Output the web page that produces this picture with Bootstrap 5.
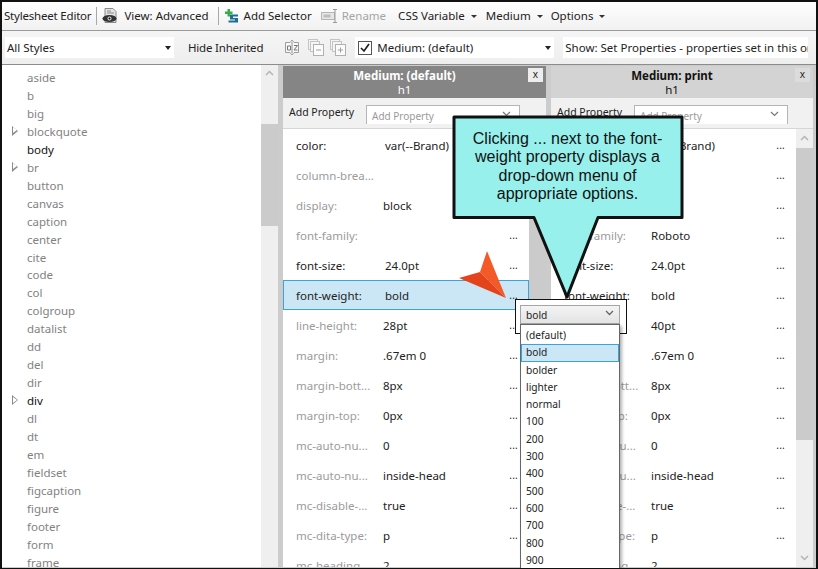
<!DOCTYPE html>
<html lang="en">
<head>
  <meta charset="UTF-8" />
  <title>Stylesheet Editor</title>
  <link href="https://cdn.jsdelivr.net/npm/bootstrap@5.3.3/dist/css/bootstrap.min.css" rel="stylesheet">
  <style>
    html, body { height: 100%; overflow: hidden; }
    body {
      font-family: "Noto Sans", "Open Sans", sans-serif;
      font-size: 11.5px;
      color: #222;
      background: #fff;
    }
    .app-frame {
      width: 818px;
      height: 569px;
      border: 2px solid #111;
      border-bottom-width: 1px;
      position: relative;
      overflow: hidden;
      display: flex;
      flex-direction: column;
    }
    .bar-top {
      height: 29px;
      flex: none;
      background: linear-gradient(#fff, #f1f1f1);
      border-bottom: 1px solid #9a9a9a;
      padding-left: 2px;
      white-space: nowrap;
    }
    .bar-title { letter-spacing: -.2px; margin-right: 5px; }
    .bar-sep { width: 1px; height: 18px; background: #a8a8a8; flex: none; }
    .view-icon { margin: 0 6px 0 5px; }
    .view-txt { margin-right: 9px; }
    .add-icon { margin: 0 5px 0 6px; }
    .rename-icon { margin: 0 3px 0 9px; }
    .css-menu { margin-left: 12px; }
    .medium-menu { margin-left: 9px; }
    .options-menu { margin-left: 8px; }
    .caret-down { display: inline-block; border: 3px solid transparent; border-top: 3px solid #333; border-bottom: 0; margin-left: 6px; vertical-align: 2px; }
    .bar-filter {
      height: 34px;
      flex: none;
      background: linear-gradient(#f5f5f5, #eeeeee);
      border-bottom: 1px solid #8c8c8c;
      padding-left: 3px;
      white-space: nowrap;
    }
    .fake-combo { background: #fff; height: 21px; line-height: 21px; flex: none; display: flex; align-items: center; overflow: hidden; }
    .fake-combo .caret-down { border-width: 4px 3.5px 0; border-top-color: #222; margin: 0; }
    .combo-styles { width: 169px; padding: 0 3px 0 2px; justify-content: space-between; }
    .hide-txt { margin-left: 14px; letter-spacing: -.2px; }
    .az-icon { margin-left: 21px; }
    .minus-icon { margin-left: 8px; }
    .plus-icon { margin-left: 6px; }
    .combo-medium { width: 199px; margin-left: 9px; padding: 0 3px; justify-content: space-between; }
    .check-icon { margin-right: 5px; }
    .combo-show { width: 245px; margin-left: 9px; padding-left: 2px; }
    .muted-txt { color: #a5a5a5; }
    .work-area { flex: 1; min-height: 0; background: #ccc; padding-bottom: 1px; }
    .tree-list { width: 259px; background: #fff; padding-top: 4px; flex: none; overflow: hidden; }
    .tree-row { height: 17.96px; line-height: 18px; padding-left: 25px; color: #828282; position: relative; white-space: nowrap; }
    .tree-row.is-set { color: #111; }
    .tree-row.has-kids::before, .tree-row.has-kids::after {
      content: ""; position: absolute; top: 3px;
      border: 5px solid transparent; border-left: 6px solid #8a8a8a; border-right: 0;
    }
    .tree-row.has-kids::before { left: 10px; }
    .tree-row.has-kids::after { top: 4.500px; border-width: 3.500px 0 3.500px 4.200px; border-left-color: #fff; left: 11px; }
    .scroll-col { width: 17px; flex: none; background: #efefef; position: relative; }
    .scroll-thumb { position: absolute; left: 0; right: 0; background: #cbcbcb; }
    .scroll-arrow { position: absolute; left: 4px; width: 9px; height: 6px; }
    .style-pane { flex: none; display: flex; flex-direction: column; background: #fff; margin: 1px 0 0 5px; }
    .pane-one { width: 263px; }
    .pane-two { width: 262px; }
    .edge-gap { width: 3px; flex: none; }
    .pane-head { height: 32px; text-align: center; line-height: 14px; padding: 3px 20px 0 0; position: relative; flex: none; }
    .pane-head.is-active { background: #858585; color: #fff; }
    .pane-head.is-idle { background: #d3d3d3; color: #111; }
    .pane-close { position: absolute; right: 3px; top: 2px; width: 15px; height: 14px; line-height: 13px; font-size: 10px; text-align: center; }
    .is-active .pane-close { background: #ededed; color: #222; }
    .is-idle .pane-close { background: #dcdcdc; color: #222; }
    .add-row { height: 31px; flex: none; background: #f1f1f1; border-bottom: 1px solid #d6d6d6; padding-left: 6px; }
    .add-label { width: 77px; font-size: 10.5px; flex: none; white-space: nowrap; }
    .add-combo { width: 154px; height: 19px; border: 1px solid #b5b5b5; border-bottom: 0; margin-top: 2px; background: #fff; color: #9a9a9a; font-size: 10px; padding: 1px 0 0 5px; line-height: 18px; position: relative; flex: none; }
    .add-combo svg { position: absolute; right: 8px; top: 5px; }
    .prop-body { flex: 1; min-height: 0; overflow: hidden; display: flex; }
    .prop-list { flex: 1; min-width: 0; padding-top: 1px; }
    .prop-row { height: 30px; line-height: 32px; padding-left: 13px; display: flex; white-space: nowrap; position: relative; }
    .prop-row.is-picked { background: #cbe6f5; box-shadow: inset 0 0 0 1px #3aa3dc; }
    .prop-name { width: 87px; color: #9b9b9b; }
    .prop-row.is-on .prop-name { color: #222; }
    .pane-one .is-on .prop-name { width: 89px; }
    .prop-more { position: absolute; right: 11px; top: -1px; color: #223; font-size: 10px; letter-spacing: .2px; }
    /* overlay pieces */
    .overlay-svg { position: absolute; left: 0; top: 0; }
    .callout-text {
      position: absolute; left: 451.500px; top: 128px; width: 228px;
      font-family: "Liberation Sans", Arial, sans-serif; font-size: 16px; line-height: 18.4px;
      text-align: center; color: #111;
    }
    .pick-box { position: absolute; left: 513px; top: 297px; width: 112px; height: 35px; border: 1px solid #111; background: #fff; }
    .pick-select {
      position: absolute; left: 518px; top: 303px; width: 100px; height: 19px;
      background: linear-gradient(#f4f4f4, #e3e3e3); border: 1px solid #a5a5a5;
      font-size: 10.2px; line-height: 19px; padding-left: 5px;
    }
    .pick-select svg { position: absolute; right: 5px; top: 4px; }
    .pick-menu {
      position: absolute; left: 518px; top: 322px; width: 100px; height: 250px;
      background: #fff; border: 1px solid #666; box-shadow: 2px 2px 3px rgba(0,0,0,.3);
      font-size: 10.2px; padding-top: 2px;
    }
    .pick-item { height: 17.3px; line-height: 17.3px; padding-left: 5px; }
    .pick-item.is-picked { background: #cbe6f5; box-shadow: inset 0 0 0 1px #3aa3dc; }
  </style>
</head>
<body>
  <div class="app-frame">

    <!-- toolbar -->
    <div class="bar-top d-flex align-items-center">
      <span class="bar-title">Stylesheet Editor</span>
      <span class="bar-sep"></span>
      <svg class="view-icon" width="16" height="16" viewBox="0 0 16 16">
        <path d="M3 .5h8l3 3v11H3z" fill="#e4e4e4" stroke="#8a8a8a"/>
        <path d="M5 3h4M5 5h7" stroke="#8a8a8a"/>
        <ellipse cx="7.500" cy="10.500" rx="7" ry="3.600" fill="#333"/>
        <circle cx="7.500" cy="10.500" r="2" fill="#ddd"/>
        <circle cx="7.500" cy="10.500" r="1" fill="#000"/>
      </svg>
      <span class="view-txt">View: Advanced</span>
      <span class="bar-sep"></span>
      <svg class="add-icon" width="14" height="16" viewBox="0 0 14 16">
        <path d="M2.500 1h2.500v2.500h2.500V6H5v2.500H2.500V6H0V3.500h2.500z" fill="#36ad47"/>
        <path d="M5 6.500h8v2H8v1.500h5v4.500H3.500v-2H10V11.500H5z" fill="#1c6f93"/>
      </svg>
      <span>Add Selector</span>
      <svg class="rename-icon" width="18" height="16" viewBox="0 0 18 16">
        <rect x=".5" y="4.500" width="13" height="7" fill="#e6e6e6" stroke="#b5b5b5"/>
        <rect x="2.500" y="6.500" width="7" height="3" fill="#bdbdbd"/>
        <path d="M12 1.500h4M14 1.500v13M12 14.500h4" stroke="#9a9a9a" fill="none"/>
      </svg>
      <span class="muted-txt">Rename</span>
      <span class="css-menu">CSS Variable<i class="caret-down"></i></span>
      <span class="medium-menu">Medium<i class="caret-down"></i></span>
      <span class="options-menu">Options<i class="caret-down"></i></span>
    </div>

    <!-- filter row -->
    <div class="bar-filter d-flex align-items-center">
      <div class="fake-combo combo-styles"><span>All Styles</span><i class="caret-down"></i></div>
      <span class="hide-txt">Hide Inherited</span>
      <svg class="az-icon" width="16" height="17" viewBox="0 0 16 17">
        <path d="M1.500 3.500h4.500l2-2.500 2 2.500h4.500v10H10l-2 2.500-2-2.500H1.500z" fill="#f8f8f8" stroke="#9c9c9c"/>
        <path d="M8 3v11" stroke="#8f8f8f"/>
        <path d="M3.500 7h3v4h-3zM10 6.500h3.500L10 11h3.500" fill="none" stroke="#777"/>
      </svg>
      <svg class="minus-icon" width="16" height="17" viewBox="0 0 16 17">
        <rect x=".5" y=".5" width="9" height="10" fill="#f5f5f5" stroke="#c4c4c4"/>
        <rect x="2.500" y="2.500" width="9" height="10" fill="#f5f5f5" stroke="#c4c4c4"/>
        <rect x="5.500" y="5.500" width="10" height="11" fill="#fbfbfb" stroke="#b0b0b0"/>
        <path d="M8 11h5" stroke="#a0a0a0"/>
      </svg>
      <svg class="plus-icon" width="16" height="17" viewBox="0 0 16 17">
        <rect x=".5" y=".5" width="9" height="10" fill="#f5f5f5" stroke="#c4c4c4"/>
        <rect x="2.500" y="2.500" width="9" height="10" fill="#f5f5f5" stroke="#c4c4c4"/>
        <rect x="5.500" y="5.500" width="10" height="11" fill="#fbfbfb" stroke="#b0b0b0"/>
        <path d="M8 11h5M10.500 8.500v5" stroke="#a0a0a0"/>
      </svg>
      <div class="fake-combo combo-medium">
        <span class="d-flex align-items-center">
          <svg class="check-icon" width="14" height="14" viewBox="0 0 14 14">
            <rect x=".5" y=".5" width="13" height="13" fill="#fff" stroke="#555"/>
            <path d="M3 7l3 3 5-7" fill="none" stroke="#222" stroke-width="1.700"/>
          </svg>
          Medium: (default)
        </span>
        <i class="caret-down"></i>
      </div>
      <div class="fake-combo combo-show">Show: Set Properties - properties set in this or in a parent</div>
    </div>

    <!-- main area -->
    <div class="work-area d-flex">
      <div class="tree-list" id="treeList"></div>
      <div class="scroll-col">
        <svg class="scroll-arrow" style="top:5px" viewBox="0 0 9 6"><path d="M1 5l3.500-3.500L8 5" fill="none" stroke="#b5b5b5" stroke-width="1.500"/></svg>
        <div class="scroll-thumb" style="top:59px;height:102px"></div>
      </div>
      <div class="style-pane pane-one" id="paneOne"></div>
      <div class="style-pane pane-two" id="paneTwo"></div>
      <div class="edge-gap"></div>
    </div>

    <!-- red arrow pointing at the dots -->
    <svg class="overlay-svg" width="814" height="566" viewBox="0 0 814 566">
      <path d="M485 249 L478 270 L504 296 Z" fill="#f45a27"/>
      <path d="M457 276 L478 270 L504 296 Z" fill="#e5431c"/>
    </svg>

    <div class="pick-box"></div>

    <!-- callout -->
    <svg class="overlay-svg" width="814" height="566" viewBox="0 0 814 566">
      <path d="M452 115 H680 V215.500 H596 L565 295 L532 215.500 H452 Z" fill="#97f0ec" stroke="#111" stroke-width="3" stroke-linejoin="round"/>
    </svg>
    <div class="callout-text">Clicking ... next to the font-<br>weight property displays a<br>drop-down menu of<br>appropriate options.</div>

    <!-- font-weight drop-down -->
    <div class="pick-select">bold
      <svg width="9" height="6" viewBox="0 0 9 6"><path d="M1 1l3.500 3.500L8 1" fill="none" stroke="#666" stroke-width="1.300"/></svg>
    </div>
    <div class="pick-menu" id="pickMenu"></div>
  </div>

  <script src="https://cdn.jsdelivr.net/npm/bootstrap@5.3.3/dist/js/bootstrap.bundle.min.js"></script>
  <script>
    const styleNames = ['aside','b','big','blockquote','body','br','button','canvas','caption','center','cite','code','col','colgroup','datalist','dd','del','dir','div','dl','dt','em','fieldset','figcaption','figure','footer','form','frame'];
    const withKids = ['blockquote','br','div'];
    const setStyles = ['body','div'];

    document.getElementById('treeList').innerHTML = styleNames.map(name => {
      const cls = (withKids.includes(name) ? ' has-kids' : '') + (setStyles.includes(name) ? ' is-set' : '');
      return `<div class="tree-row${cls}">${name}</div>`;
    }).join('');

    const paneOneRows = [
      ['color:','var(--Brand)',1],['column-brea...','',0],['display:','block',0],['font-family:','',0],['font-size:','24.0pt',1],
      ['font-weight:','bold',1],['line-height:','28pt',0],['margin:','.67em 0',0],['margin-bott...','8px',0],['margin-top:','0px',0],
      ['mc-auto-nu...','0',0],['mc-auto-nu...','inside-head',0],['mc-disable-...','true',0],['mc-dita-type:','p',0],['mc-heading-...','2',0]
    ];
    const paneTwoRows = paneOneRows.map(r => r.slice());
    paneTwoRows[3] = ['font-family:','Roboto',0];
    paneTwoRows[6] = ['line-height:','40pt',0];

    function drawPane(el, title, active, rows) {
      const rowHtml = rows.map(r => {
        const picked = active && r[0] === 'font-weight:' ? ' is-picked' : '';
        return `<div class="prop-row${r[2] ? ' is-on' : ''}${picked}"><span class="prop-name">${r[0]}</span><span>${r[1]}</span><span class="prop-more">...</span></div>`;
      }).join('');
      el.innerHTML = `
        <div class="pane-head ${active ? 'is-active' : 'is-idle'}">
          <div class="fw-bold">${title}</div><div>h1</div>
          <span class="pane-close">x</span>
        </div>
        <div class="add-row d-flex align-items-center">
          <span class="add-label">Add Property</span>
          <div class="add-combo">Add Property
            <svg width="9" height="6" viewBox="0 0 9 6"><path d="M1 1l3.500 3.500L8 1" fill="none" stroke="#777" stroke-width="1.200"/></svg>
          </div>
        </div>
        <div class="prop-body">
          <div class="prop-list">${rowHtml}</div>
          <div class="scroll-col">
            <svg class="scroll-arrow" style="top:6px" viewBox="0 0 9 6"><path d="M1 5l3.500-3.500L8 5" fill="none" stroke="#b5b5b5" stroke-width="1.500"/></svg>
            <div class="scroll-thumb" style="top:19px;height:292px"></div>
            <svg class="scroll-arrow" style="bottom:6px" viewBox="0 0 9 6"><path d="M1 1l3.500 3.500L8 1" fill="none" stroke="#b5b5b5" stroke-width="1.500"/></svg>
          </div>
        </div>`;
    }
    drawPane(document.getElementById('paneOne'), 'Medium: (default)', true, paneOneRows);
    drawPane(document.getElementById('paneTwo'), 'Medium: print', false, paneTwoRows);

    const weights = ['(default)','bold','bolder','lighter','normal','100','200','300','400','500','600','700','800','900'];
    document.getElementById('pickMenu').innerHTML = weights.map(w =>
      `<div class="pick-item${w === 'bold' ? ' is-picked' : ''}">${w}</div>`
    ).join('');
  </script>
</body>
</html>
